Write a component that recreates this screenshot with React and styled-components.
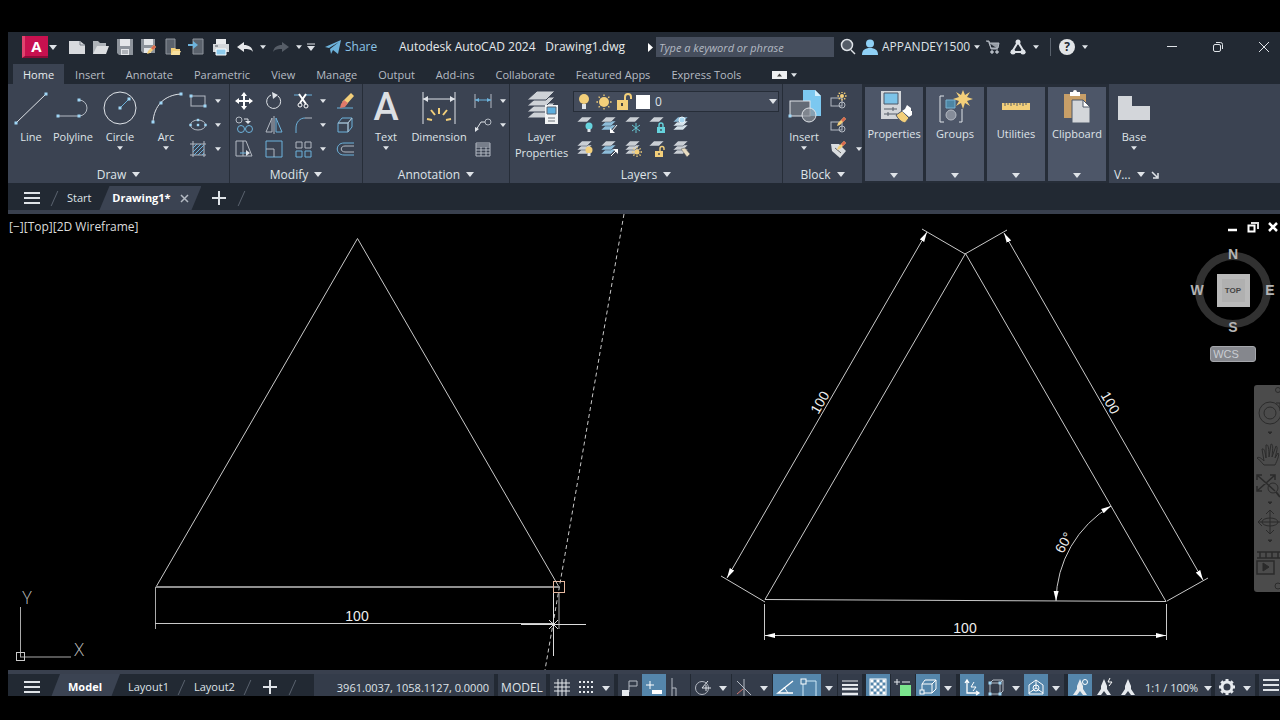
import React, { useState } from 'react';
import styled, { createGlobalStyle } from 'styled-components';

const blue = '#6db3dc';
const light = '#dfe3e8';
const grey = '#b4bac3';
const yellow = '#f3cf7a';

const MENU_TABS = [
  'Home', 'Insert', 'Annotate', 'Parametric', 'View', 'Manage', 'Output',
  'Add-ins', 'Collaborate', 'Featured Apps', 'Express Tools',
];

// Shared icon helpers
const Icon = ({ w = 18, h = w, children }) => (
  <svg width={w} height={h} viewBox={`0 0 ${w} ${h}`} fill="none" stroke={grey} strokeWidth="1" aria-hidden="true">
    {children}
  </svg>
);

const Caret = ({ big }) => (
  <svg width={big ? 8 : 6} height={big ? 5 : 4} viewBox="0 0 8 5" aria-hidden="true">
    <path d="M0 0h8L4 5z" fill={light} />
  </svg>
);

const Dots = ({ at, s = 3 }) =>
  at.map(([x, y]) => (
    <rect key={`${x}-${y}`} x={x - s / 2} y={y - s / 2} width={s} height={s} fill="#9fd6f5" stroke="none" />
  ));

const Sheets = ({ n = 3, tint = '#c9ced4', tint2 = tint }) =>
  Array.from({ length: n }, (_, i) => n - 1 - i).map((i) => (
    <path key={i} d={`M6 ${1 + i * 4}h10l-5 5H1z`} fill={i === 0 ? tint : tint2} stroke="#3b4352" strokeWidth="0.5" />
  ));

const Bulb = ({ x, y, fill }) => (
  <g stroke="none">
    <circle cx={x} cy={y} r="3.5" fill={fill} />
    <rect x={x - 1.5} y={y + 3} width="3" height="3" fill={light} />
  </g>
);

const Sun = ({ x, y, r = 3, fill = yellow }) => (
  <g stroke={fill} strokeWidth="1.3">
    <circle cx={x} cy={y} r={r} fill={fill} stroke="none" />
    {[0, 45, 90, 135, 180, 225, 270, 315].map((a) => (
      <path key={a} d={`M${x} ${y - r - 1}v-1.6`} transform={`rotate(${a} ${x} ${y})`} />
    ))}
  </g>
);

const Lock = ({ x, y, fill, open }) => (
  <g>
    <rect x={x} y={y} width="8" height="6" fill={fill} stroke="none" />
    <path
      d={open ? `M${x + 5} ${y}v-2.5a2 2 0 0 1 4 0v1.5` : `M${x + 2} ${y}v-2a2 2 0 0 1 4 0v2`}
      stroke={fill}
      strokeWidth="1.4"
    />
    <path d={`M${x + 4} ${y + 2}v2`} stroke="#39404e" strokeWidth="1.3" />
  </g>
);

const Pencil = ({ x, y }) => (
  <g stroke="none">
    <path d={`M${x} ${y}l2 2-6 6-3 1 1-3z`} fill={yellow} />
    <path d={`M${x} ${y}l2 2-3 3-2-2z`} fill="#d9694f" />
  </g>
);

const Burger = () => (
  <Icon w={16} h={14}>
    <path d="M0 2h16M0 7h16M0 12h16" stroke={light} strokeWidth="2" />
  </Icon>
);

const Plus = () => (
  <Icon w={14}>
    <path d="M7 0v14M0 7h14" stroke={light} strokeWidth="2" />
  </Icon>
);

const quickTools = [
  {
    name: 'New',
    icon: <Icon><path d="M1 3h11l5 4v9H1z" fill="#d8dade" stroke="none" /><path d="M12 3v4h5" stroke="#7c828c" /></Icon>,
  },
  {
    name: 'Open',
    icon: <Icon><path d="M1 16V3h5l2 2h6v3H6l-3 8z" fill="#aeb3b9" stroke="none" /><path d="M5 8h12l-3 8H1z" fill="#dcdee1" stroke="none" /></Icon>,
  },
  {
    name: 'Save',
    icon: <Icon><path d="M1 1h16v16H3l-2-2z" fill="#8d939b" stroke="none" /><path d="M4 1h10v7H4zM5 11h8v6H5z" fill="#e4e6e9" stroke="none" /><path d="M6 13h6M6 15h6" stroke="#7a8089" /></Icon>,
  },
  {
    name: 'Save As',
    icon: <Icon><path d="M1 1h14v14H3l-2-2z" fill="#8d939b" stroke="none" /><path d="M4 1h9v6H4zM4 10h7v5H4z" fill="#e4e6e9" stroke="none" /><Pencil x={14} y={7} /></Icon>,
  },
  {
    name: 'Open from Web & Mobile',
    icon: <Icon><path d="M2 1h9v15H2z" fill="#5b626c" stroke="#8f959d" /><path d="M7 10h4l1 1h4v6H7z" fill={yellow} stroke="none" /><path d="M9 13h8l-2 4H7z" fill="#f8e0a0" stroke="none" /></Icon>,
  },
  {
    name: 'Save to Web & Mobile',
    icon: <Icon><path d="M5 1h10v15H5z" fill="#5b626c" stroke="#8f959d" /><path d="M0 6h5V3l5 4-5 4V8H0z" fill={blue} stroke="none" /></Icon>,
  },
  {
    name: 'Plot',
    icon: <Icon><path d="M4 1h10v5H4z" fill="#e9ebed" stroke="none" /><path d="M1 6h16v8H1z" fill="#d4d7da" stroke="none" /><path d="M4 11h10v6H4z" fill="#8ecbec" stroke="#fff" /><path d="M3 8h3" stroke="#555b65" /></Icon>,
  },
  {
    name: 'Undo',
    icon: <Icon><path d="M1 9l7-5v3c5 0 8 2 9 7-2-3-5-3-9-3v3z" fill="#e6e8eb" stroke="none" /></Icon>,
  },
];

const smallDraw = [
  ['Rectangle', <Icon><rect x="2" y="4" width="14" height="10" /><Dots at={[[2, 4], [16, 14]]} /></Icon>],
  ['Ellipse', <Icon><ellipse cx="9" cy="9" rx="7.5" ry="5" /><Dots at={[[9, 9], [1.5, 9], [9, 4], [16.5, 9]]} s={2.4} /></Icon>],
  [
    'Hatch',
    <Icon>
      <path d="M4 1v16M15 1v16M1 4h16M1 15h16" />
      <path d="M4 8l4-4M4 12l8-8M5 15l10-10M9 15l6-6M13 15l2-2" stroke={blue} />
    </Icon>,
  ],
];

const modifyTools = [
  { name: 'Move', icon: <Icon><path d="M9 2v14M2 9h14" stroke="#fff" strokeWidth="2" /><path d="M9 0l3 4H6zM9 18l3-4H6zM0 9l4-3v6zM18 9l-4-3v6z" fill="#fff" stroke="none" /></Icon> },
  { name: 'Rotate', icon: <Icon><path d="M6 3a7 7 0 1 0 7 1" stroke={light} /><path d="M7 0l6 3-5 4z" fill={light} stroke="none" /></Icon> },
  { name: 'Trim', caret: true, icon: <Icon><path d="M0 3h5M12 3h6" stroke={blue} /><path d="M5 2l7 10M12 2L6 11" stroke="#fff" strokeWidth="2" /><circle cx="6" cy="13" r="2" stroke="#fff" /><circle cx="12" cy="14" r="2" stroke="#fff" /></Icon> },
  { name: 'Erase', icon: <Icon><path d="M1 16h16" stroke={blue} /><path d="M15 1l3 3-8 9-4-3z" fill={yellow} stroke="none" /><path d="M8 8l4 3-3 4-5 1 1-4z" fill="#e0796a" stroke="none" /></Icon> },
  { name: 'Copy', icon: <Icon><circle cx="4" cy="4" r="3" /><circle cx="6" cy="13" r="3.5" stroke={blue} /><circle cx="14" cy="13" r="3.5" stroke={blue} /><path d="M9 3h4v4" stroke={light} /><path d="M10 5h6l-3 3z" fill={light} stroke="none" /></Icon> },
  { name: 'Mirror', icon: <Icon><path d="M7 2v14H1z" /><path d="M11 2v14h6z" stroke={blue} /><path d="M9 0v18" /></Icon> },
  { name: 'Fillet', caret: true, icon: <Icon><path d="M2 17v-5C2 6 6 2 11 2" stroke={blue} /><path d="M11 2h7" /></Icon> },
  { name: 'Explode', icon: <Icon><path d="M2 7h10v9H2zM2 7l4-5h10l-4 5M16 2v9l-4 5" stroke={blue} /><path d="M2 7h10v9M12 7l4-5" /></Icon> },
  { name: 'Stretch', icon: <Icon><path d="M1 1h7v15H1zM8 1h3l6 15H8" /><path d="M5 13h8" stroke={blue} /><path d="M11 10l4 3-4 3z" fill={light} stroke="none" /></Icon> },
  { name: 'Scale', icon: <Icon><path d="M1 17V1h16v16z" stroke={blue} /><path d="M1 9h8v8" /></Icon> },
  { name: 'Array', caret: true, icon: <Icon><path d="M2 2h6v6H2zM11 2h6v6h-6z" /><path d="M2 11h6v6H2zM11 11h6v6h-6z" stroke={blue} /></Icon> },
  { name: 'Offset', icon: <Icon><path d="M18 3H8C-1 3-1 15 8 15h10" stroke={blue} /><path d="M18 6H9C4 6 4 12 9 12h9" /></Icon> },
];

const layerTools = [
  ['Off', <Icon><Sheets n={1} /><Bulb x={13} y={10} fill="#66d3dd" /></Icon>],
  ['Isolate', <Icon><Sheets tint2="#8dbcd8" /><path d="M17 9l-5 6" stroke="#fff" /><path d="M10 12v5h5z" fill="#fff" stroke="none" /></Icon>],
  ['Freeze', <Icon><Sheets n={1} /><path d="M12 7v10M8 9l8 6M8 15l8-6" stroke="#66c6d3" /></Icon>],
  ['Lock', <Icon><Sheets n={1} /><Lock x={9} y={11} fill="#66d3dd" /></Icon>],
  ['Make Current', <Icon><Sheets tint="#8dbcd8" tint2="#d5e2ea" /><circle cx="10" cy="4" r="3" fill="#a9d8f2" stroke="#e8f2f8" /></Icon>],
  ['Turn All On', <Icon><Sheets /><Bulb x={13} y={10} fill={yellow} /></Icon>],
  ['Unisolate', <Icon><Sheets tint2="#8dbcd8" /><path d="M11 16l5-5" stroke="#fff" /><path d="M13 9h5v5z" fill="#fff" stroke="none" /></Icon>],
  ['Thaw All', <Icon><Sheets /><Sun x={13} y={12} r={2.5} /></Icon>],
  ['Unlock', <Icon><Sheets n={1} /><Lock x={7} y={11} fill={yellow} open /></Icon>],
  ['Match Layer', <Icon><Sheets /><path d="M9 9l4-1 5 6-3 3z" fill="#e8dcc0" stroke="#555" strokeWidth="0.5" /></Icon>],
];

const blockTools = [
  ['Create', <Icon><rect x="1" y="6" width="11" height="8" /><circle cx="12" cy="13" r="3" /><Sun x={12} y={4} r={2} /></Icon>],
  ['Edit', <Icon><rect x="1" y="6" width="11" height="8" /><circle cx="12" cy="13" r="3" /><Pencil x={14} y={1} /></Icon>],
  ['Edit Attributes', <Icon><path d="M1 4h8l7 7-6 7-8-7z" fill="#dadde0" stroke="none" /><path d="M5 8l6 5" stroke="#666" /><Pencil x={14} y={1} /></Icon>],
];

const foldedPanels = [
  {
    name: 'Properties',
    icon: (
      <Icon w={36}>
        <path d="M5 2h20v28H5z" fill="#d3d6da" stroke="none" />
        <path d="M8 4h14v11H8z" fill="#7cc3e8" stroke="#4d5666" />
        <path d="M8 20h13M8 25h13M17 18v4M12 23v4" stroke="#555c68" />
        <path d="M20 26l6-4 7 7-4 5c-4-1-7-4-9-8z" fill={yellow} stroke="#4d5666" />
        <path d="M26 22l3-2 2-4 4 3v3h1v4l-3 2z" fill="#fff" stroke="none" />
      </Icon>
    ),
  },
  {
    name: 'Groups',
    icon: (
      <Icon w={36}>
        <path d="M7 7H3v26h4M22 33h3V20" stroke={light} />
        <path d="M9 11h9v8H9z" fill="#4d86a4" stroke="#79b2d1" />
        <circle cx="14" cy="26" r="5" fill="#858c99" />
        <path d="M26 1l2 5 5-3-3 5 6 2-6 2 3 5-5-3-2 6-2-6-5 3 3-5-6-2 6-2-3-5 5 3z" fill={yellow} stroke="none" />
      </Icon>
    ),
  },
  {
    name: 'Utilities',
    icon: (
      <Icon w={36}>
        <path d="M4 14h28v7H4z" fill={yellow} stroke="none" />
        <path d="M7 14v3M10 14v2M13 14v3M16 14v2M19 14v3M22 14v2M25 14v3M28 14v2" stroke="#555c68" />
      </Icon>
    ),
  },
  {
    name: 'Clipboard',
    icon: (
      <Icon w={36}>
        <path d="M5 5h22v24H5z" fill="#c89f68" stroke="none" />
        <path d="M11 3h3a2 2 0 0 1 4 0h3v4H11z" fill="#fff" stroke="none" />
        <path d="M13 11h11l7 7v16H13z" fill="#d3d6da" stroke="#4d5666" />
        <path d="M24 11v7h7z" fill="#fff" stroke="#4d5666" />
      </Icon>
    ),
  },
];

const S = '#e6eaee';
const Person = ({ cx = 9 }) => (
  <path d={`M${cx} 1l3 7v3l4 6h-4l-3-4-3 4H${cx - 7}l4-6V8z`} fill={S} stroke="none" />
);

// cluster > group > item; "caret" entries are the little drop-down arrows
const statusClusters = [
  [[
    { name: 'Grid', icon: <Icon><path d="M5 1v17M9 1v17M13 1v17M1 5h16M1 9h16M1 13h16" stroke={S} /></Icon> },
    { name: 'Snap', icon: <Icon>{[3, 7, 11, 15].map((x) => <path key={x} d={`M${x} 3v2M${x} 8v2M${x} 13v2`} stroke={S} strokeWidth="2" />)}</Icon> },
    { caret: true },
  ]],
  [
    [
      { name: 'Infer', icon: <Icon><path d="M8 14V3h8v5H8" stroke={grey} /><path d="M1 12h7v6H1z" fill={S} stroke="none" /></Icon> },
      { name: 'Dynamic Input', on: true, icon: <Icon><path d="M5 3v8M1 7h8" stroke="#fff" /><path d="M7 12h10v4H7z" fill="#fff" stroke="none" /></Icon> },
      { name: 'Ortho', icon: <Icon><path d="M3 0v18M3 10h4v8" /></Icon> },
    ],
    [
      { name: 'Polar', icon: <Icon><circle cx="8" cy="10" r="6.5" /><path d="M8 10h9M8 10l6-7M12 7v6" stroke={light} /></Icon> },
      { caret: true },
    ],
    [
      { name: 'Isodraft', icon: <Icon><path d="M9 1v17M2 3l14 14" /><path d="M2 16l6-5" stroke="#d5776e" /></Icon> },
      { caret: true },
    ],
    [
      { name: 'Tracking', on: true, icon: <Icon><path d="M17 3L2 15h15" stroke="#fff" strokeWidth="1.4" /><path d="M8 9l4 6" stroke="#fff" /></Icon> },
      { name: 'Object Snap', on: true, icon: <Icon><path d="M3 3h13v15M3 5v13" stroke="#cfe9f8" /><rect x="1" y="1" width="5" height="5" stroke="#fff" fill="#5586ab" /></Icon> },
      { caret: true },
    ],
    [{ name: 'Lineweight', icon: <Icon><path d="M1 3h16" stroke={S} /><path d="M1 7h16" stroke={S} strokeWidth="2" /><path d="M1 11h16M1 16h16" stroke={S} strokeWidth="2.6" /></Icon> }],
  ],
  [
    [{
      name: 'Transparency',
      on: true,
      icon: (
        <Icon>
          <rect x="1" y="1" width="16" height="16" stroke="#fff" />
          {[0, 1, 2, 3, 4].map((r) => [0, 1, 2, 3, 4].map((c) => (r + c) % 2 === 0 && (
            <rect key={`${r}${c}`} x={1.5 + c * 3} y={1.5 + r * 3} width="3" height="3" fill="#fff" stroke="none" />
          )))}
        </Icon>
      ),
    }],
    [{ name: 'Cycling', icon: <Icon><path d="M3 1v6M0 4h6M8 4h8" stroke={S} /><path d="M6 7h11v11H6z" fill="#7be58d" stroke="none" /></Icon> }],
    [
      { name: '3D Object Snap', on: true, icon: <Icon><path d="M3 6h10v9H3zM3 6l3-4h11l-4 4M17 2v9l-4 4" stroke="#fff" /><rect x="1" y="12" width="4" height="4" fill="#5586ab" stroke="#fff" /></Icon> },
      { caret: true },
    ],
  ],
  [[
    { name: 'Dynamic UCS', on: true, icon: <Icon><path d="M4 2v13h12M2 5l2-3 2 3M13 13l3 2-3 2" stroke="#fff" strokeWidth="1.3" /><path d="M11 4l-3 5h5l-3 4" stroke="#fff" /></Icon> },
    { name: 'Selection Filter', icon: <Icon><path d="M3 5h10v11H3zM3 5l3-3h10l-3 3M16 2v11l-3 3" /><Dots at={[[3, 5], [13, 5], [3, 16], [13, 16]]} /></Icon> },
    { caret: true },
    { name: 'Gizmo', on: true, icon: <Icon><path d="M9 2l7 5v9H2V7zM9 2v8M9 10l-7 5M9 10l7 5" stroke="#fff" /><circle cx="9" cy="10" r="3" stroke="#fff" /></Icon> },
    { caret: true },
  ]],
  [[
    { name: 'Annotation Visibility', on: true, icon: <Icon><Person /><circle cx="14" cy="4" r="2.5" stroke="#fff" /></Icon> },
    { name: 'Auto Scale', icon: <Icon><Person /><path d="M15 0l-2 4h4l-3 4" stroke="#fff" /></Icon> },
    { name: 'Annotation Scale', icon: <Icon><Person /></Icon> },
    { text: '1:1 / 100%' },
  ]],
  [[
    {
      name: 'Workspace',
      icon: (
        <Icon>
          <circle cx="9" cy="9" r="5" stroke={S} strokeWidth="3" />
          {[0, 45, 90, 135, 180, 225, 270, 315].map((a) => <path key={a} d="M9 1v3" stroke={S} strokeWidth="3" transform={`rotate(${a} 9 9)`} />)}
        </Icon>
      ),
    },
    { caret: true },
  ]],
  [[{ name: 'Customization', icon: <Burger /> }]],
];

const dimensionLines = [
  'M927 232L727 578',
  'M1004 233l199 347',
  'M765 635.5h401',
  'M1056 601A112 112 0 0 1 1111 506',
];

const Drawing = () => (
  <DrawingSvg viewBox="8 214 1272 456" preserveAspectRatio="xMinYMin meet" role="img" aria-label="Drawing area">
    <defs>
      <marker id="tip" viewBox="0 0 10 6" refX="10" refY="3" markerWidth="10" markerHeight="6" orient="auto-start-reverse">
        <path d="M0 0.5L10 3 0 5.5z" fill="#fff" />
      </marker>
    </defs>
    <g stroke="#c9c9c9" fill="none">
      <path d="M156 587L357.5 238.5 559 587" />
      <path d="M156 587h403" stroke="#8f8f8f" strokeWidth="2" />
      <path d="M155.5 587v42M559 593v36" stroke="#aaa" />
      <path d="M155 623.5h398" />
      <path d="M624 214L545 670" strokeDasharray="4 3" />
      <path d="M521 624.5h65M553.5 588v68M549 620l9 9M558 620l-9 9" stroke="#ddd" />
      <rect x="553.5" y="581.5" width="11" height="11" stroke="#e6b9a0" />
      <path d="M765 599.5L965.5 253.5 1166 601.5z" />
      <path d="M922 229l43 25 42-24M721 576l44 26M1167 601l41-23M764.5 604v36M1166.5 604v36" />
      {dimensionLines.map((d) => <path key={d} d={d} markerStart="url(#tip)" markerEnd="url(#tip)" />)}
      <path d="M20.5 607v50M20 657h51" stroke="#aaa" />
      <rect x="16.5" y="652.5" width="8" height="8" />
    </g>
    <g fill="#eee" fontFamily="Liberation Sans, Arial, sans-serif" fontSize="14" textAnchor="middle">
      <text x="357" y="621">100</text>
      <text x="965" y="633">100</text>
      <text transform="translate(824 405) rotate(-60)">100</text>
      <text transform="translate(1106 405) rotate(60)">100</text>
      <text transform="translate(1068 545) rotate(-60)">60°</text>
    </g>
    <g fill="#bbb" fontFamily="Open Sans, sans-serif" fontWeight="300" fontSize="18" textAnchor="middle">
      <text x="27" y="604">Y</text>
      <text x="79" y="656">X</text>
    </g>
  </DrawingSvg>
);

const ToolColumn = ({ tools, carets }) => (
  <SmallColumn>
    {tools.map(([name, icon], i) => (
      <SmallRow key={name}>
        <SmallButton aria-label={name}>{icon}</SmallButton>
        {carets[i] && <CaretButton aria-label={`${name} options`}><Caret /></CaretButton>}
      </SmallRow>
    ))}
  </SmallColumn>
);

const Big = ({ w, label, caret, children }) => (
  <BigButton $w={w}>
    {children}
    <BigLabel>{label}</BigLabel>
    {caret && <Caret />}
  </BigButton>
);

const App = () => {
  const [activeTab, setActiveTab] = useState('Home');

  return (
    <>
      <GlobalStyle />
      <Window>
        <TitleBar>
          <QuickAccess>
            <AppButton>A</AppButton>
            <AppCaret aria-label="Application menu"><Caret big /></AppCaret>
            {quickTools.map((t) => <QuickButton key={t.name} aria-label={t.name}>{t.icon}</QuickButton>)}
            <CaretButton aria-label="Undo list"><Caret /></CaretButton>
            <QuickButton aria-label="Redo">
              <Icon><path d="M17 9l-7-5v3C5 7 2 9 1 14c2-3 5-3 9-3v3z" fill="#565d67" stroke="none" /></Icon>
            </QuickButton>
            <CaretButton aria-label="Redo list"><Caret /></CaretButton>
            <CaretButton aria-label="Customize">
              <Icon w={8}><path d="M0 1h8" stroke={light} /><path d="M0 3h8L4 8z" fill={light} stroke="none" /></Icon>
            </CaretButton>
            <ShareButton>
              <Icon w={16}><path d="M0 8L16 1 13 15 8 11l-2 4-1-5 9-7-10 6z" fill={blue} stroke="none" /></Icon>
              Share
            </ShareButton>
          </QuickAccess>
          <Title>
            <span>Autodesk AutoCAD 2024</span>
            <span>Drawing1.dwg</span>
          </Title>
          <Icon w={9}><path d="M1 0v9l5-4.5z" fill="#fff" stroke="none" /></Icon>
          <Search type="text" placeholder="Type a keyword or phrase" aria-label="Search" />
          <Account>
            <SmallButton aria-label="Search">
              <Icon><circle cx="8" cy="7" r="5.5" fill="#555d68" stroke={light} strokeWidth="1.5" /><path d="M12 12l4 4" stroke={light} strokeWidth="1.5" /></Icon>
            </SmallButton>
            <UserButton>
              <Icon w={16}><circle cx="8" cy="4.5" r="4" fill="#8fd0f5" stroke="none" /><path d="M0 16c0-5 3-7 8-7s8 2 8 7z" fill="#8fd0f5" stroke="none" /></Icon>
              APPANDEY1500
              <Caret />
            </UserButton>
            <CartButton aria-label="Store">
              <Icon w={14}><path d="M0 1h3l2 8h7M3 3h10l-1 5H5z" fill="#969ca5" stroke={grey} /><circle cx="6" cy="12" r="1.3" fill={grey} /><circle cx="11" cy="12" r="1.3" fill={grey} /></Icon>
            </CartButton>
            <QuickButton aria-label="Autodesk apps">
              <Icon w={16}><path d="M8 3L2 13h12z" stroke={light} strokeWidth="2" /><g fill={light} stroke="none"><circle cx="8" cy="3" r="2.5" /><circle cx="3" cy="13" r="2.5" /><circle cx="13" cy="13" r="2.5" /></g></Icon>
            </QuickButton>
            <CaretButton aria-label="Apps list"><Caret /></CaretButton>
            <Separator />
            <HelpButton aria-label="Help">?</HelpButton>
            <CaretButton aria-label="Help list"><Caret /></CaretButton>
          </Account>
          <WindowButtons>
            <WindowButton aria-label="Minimize"><Icon w={12}><path d="M1 5.5h10" stroke={light} /></Icon></WindowButton>
            <WindowButton aria-label="Restore"><Icon w={12}><rect x="1.5" y="3.5" width="7" height="7" rx="1.5" stroke={light} /><path d="M4 1.5h4.5a2 2 0 0 1 2 2V8" stroke={light} /></Icon></WindowButton>
            <WindowButton aria-label="Close"><Icon w={12}><path d="M1 1l10 10M11 1L1 11" stroke={light} /></Icon></WindowButton>
          </WindowButtons>
        </TitleBar>

        <MenuBar>
          {MENU_TABS.map((tab) => (
            <MenuTab key={tab} $active={tab === activeTab} onClick={() => setActiveTab(tab)}>{tab}</MenuTab>
          ))}
          <RibbonToggle aria-label="Minimize ribbon">
            <Icon w={15} h={8}><path d="M0 0h15v8H0z" fill="#eef0f2" stroke="none" /><path d="M5 5.5h5L7.5 2.5z" fill="#444" stroke="none" /></Icon>
            <Caret />
          </RibbonToggle>
        </MenuBar>

        <Ribbon>
          <Panel $w={222}>
            <PanelBody>
              <Big w={46} label="Line">
                <Icon w={36}><path d="M3 33L33 4" stroke={light} /><Dots at={[[3, 33], [33, 4]]} /></Icon>
              </Big>
              <Big w={38} label="Polyline">
                <Icon w={36}><path d="M3 26h21a8 8 0 0 0 0-16" stroke={grey} /><Dots at={[[3, 26], [24, 26], [24, 10]]} /></Icon>
              </Big>
              <Big w={56} label="Circle" caret>
                <Icon w={36}><circle cx="18" cy="18" r="16" stroke={light} /><path d="M18 18l9-9" stroke={blue} /><Dots at={[[18, 18], [27, 9]]} /></Icon>
              </Big>
              <Big w={36} label="Arc" caret>
                <Icon w={36}><path d="M5 32C6 16 16 5 33 4" stroke={light} /><Dots at={[[5, 32], [13, 13], [33, 4]]} /></Icon>
              </Big>
              <ToolColumn tools={smallDraw} carets={[true, true, true]} />
            </PanelBody>
            <PanelTitle>Draw <Caret big /></PanelTitle>
          </Panel>

          <Panel $w={133}>
            <ModifyGrid>
              {modifyTools.map((t) => (
                <SmallRow key={t.name}>
                  <SmallButton aria-label={t.name}>{t.icon}</SmallButton>
                  {t.caret && <CaretButton aria-label={`${t.name} options`}><Caret /></CaretButton>}
                </SmallRow>
              ))}
            </ModifyGrid>
            <PanelTitle>Modify <Caret big /></PanelTitle>
          </Panel>

          <Panel $w={147}>
            <PanelBody>
              <Big w={46} label="Text" caret><BigLetter>A</BigLetter></Big>
              <Big w={60} label="Dimension">
                <Icon w={36}>
                  <path d="M2 2v32M34 2v32M2 9h32" stroke={light} />
                  <path d="M2 9l5-3v6zM34 9l-5-3v6z" fill={light} stroke="none" />
                  <path d="M18 18v6M10 20l4 5M26 20l-4 5M6 29l5 1M30 29l-5 1" stroke={yellow} strokeWidth="2" />
                </Icon>
              </Big>
              <ToolColumn
                carets={[true, true, false]}
                tools={[
                  ['Linear', <Icon><path d="M1 2v14M17 2v14" /><path d="M1 8h16" stroke={blue} /><path d="M1 8l4-2v4zM17 8l-4-2v4z" fill={blue} stroke="none" /></Icon>],
                  ['Leader', <Icon><circle cx="14" cy="6" r="3" /><path d="M11 6H7l-5 8" stroke={light} /><path d="M1 16V11l4 2z" fill={light} stroke="none" /></Icon>],
                  ['Table', <Icon><path d="M2 3h14v13H2zM2 7h14M2 10h14M2 13h14M7 7v9M12 7v9M2 5h14" /></Icon>],
                ]}
              />
            </PanelBody>
            <PanelTitle>Annotation <Caret big /></PanelTitle>
          </Panel>

          <Panel $w={273}>
            <PanelBody>
              <Big w={63} label={<>Layer<br />Properties</>}>
                <Icon w={36}>
                  {[19, 13, 7, 1].map((y) => <path key={y} d={`M13 ${y}h18l-9 9H3z`} fill="#ced2d7" stroke="#3b4352" />)}
                  <rect x="21" y="15" width="13" height="19" fill="#f2f4f5" stroke="none" />
                  <path d="M23 17h9v7h-9z" fill="#5caede" stroke="#5b6472" />
                  <path d="M24 28h7M24 31h7" stroke="#6b7079" />
                </Icon>
              </Big>
              <LayerSide>
                <LayerCombo>
                  <Icon w={20}><circle cx="9" cy="7" r="5" fill={yellow} stroke="none" /><path d="M7 12h4v5H7z" fill={light} stroke="none" /></Icon>
                  <Icon w={20}><Sun x={9} y={10} r={5} /></Icon>
                  <Icon w={20}><path d="M2 8h11v10H2z" fill={yellow} stroke="none" /><path d="M10 8V5a3 3 0 0 1 6 0v2" stroke={yellow} strokeWidth="2" /><path d="M7 11v3" stroke="#444" strokeWidth="2" /></Icon>
                  <Icon w={16}><path d="M1 1h14v14H1z" fill="#fff" stroke="none" /></Icon>
                  <LayerSelect aria-label="Current layer" defaultValue="0">
                    <option value="0">0</option>
                  </LayerSelect>
                  <Caret big />
                </LayerCombo>
                <LayerGrid>
                  {layerTools.map(([name, icon]) => <SmallButton key={name} aria-label={name}>{icon}</SmallButton>)}
                </LayerGrid>
              </LayerSide>
            </PanelBody>
            <PanelTitle>Layers <Caret big /></PanelTitle>
          </Panel>

          <Panel $w={80}>
            <PanelBody>
              <Big w={42} label="Insert" caret>
                <Icon w={36}>
                  <path d="M17 0h12l6 6v20H17z" fill="#7cc8f0" stroke="none" />
                  <path d="M29 0v6h6z" fill="#d5effc" stroke="none" />
                  <rect x="4" y="11" width="20" height="15" fill="#646b76" stroke={light} />
                  <circle cx="23" cy="25" r="7" fill="#8a9099" fillOpacity="0.7" stroke={light} />
                  <Dots at={[[4, 26]]} />
                </Icon>
              </Big>
              <ToolColumn tools={blockTools} carets={[false, false, true]} />
            </PanelBody>
            <PanelTitle>Block <Caret big /></PanelTitle>
          </Panel>

          <FoldedGroup>
            {foldedPanels.map((p) => (
              <FoldedPanel key={p.name}>
                {p.icon}
                <FoldedLabel>{p.name}</FoldedLabel>
                <FoldedCaret><Caret big /></FoldedCaret>
              </FoldedPanel>
            ))}
          </FoldedGroup>

          <ViewPanel>
            <PanelBody>
              <Big w={50} label="Base" caret>
                <Icon w={36}><path d="M2 6h14v10h18v14H2z" fill="#d3d6da" stroke="none" /></Icon>
              </Big>
            </PanelBody>
            <ViewTitle>V... <Caret big /><Icon w={8}><path d="M1 1l5 5M7 2v5H2" stroke={light} strokeWidth="1.5" /></Icon></ViewTitle>
          </ViewPanel>
        </Ribbon>

        <FileTabs>
          <BurgerButton aria-label="File tab menu"><Burger /></BurgerButton>
          <Slash />
          <FileTab>Start</FileTab>
          <ActiveFileTab $w={102}>
            Drawing1*
            <Icon w={9}><path d="M1 1l7 7M8 1L1 8" stroke={grey} strokeWidth="1.5" /></Icon>
          </ActiveFileTab>
          <AddButton aria-label="New drawing"><Plus /></AddButton>
          <Slash />
        </FileTabs>

        <Canvas>
          <Drawing />
          <ViewLabel>
            <ViewButton>[−]</ViewButton>
            <ViewButton>[Top]</ViewButton>
            <ViewButton>[2D Wireframe]</ViewButton>
          </ViewLabel>
          <DocButtons>
            <DocButton aria-label="Minimize drawing"><Icon w={12}><path d="M1 9h9" stroke="#fff" strokeWidth="2.5" /></Icon></DocButton>
            <DocButton aria-label="Restore drawing"><Icon w={12}><path d="M4 2h7v6" stroke="#ddd" strokeWidth="2" /><rect x="1.5" y="4.5" width="6" height="6" stroke="#fff" strokeWidth="2" /></Icon></DocButton>
            <DocButton aria-label="Close drawing"><Icon w={12}><path d="M2 2l8 8M10 2l-8 8" stroke="#fff" strokeWidth="2.5" /></Icon></DocButton>
          </DocButtons>
          <ViewCube>
            <svg width="88" height="88" viewBox="0 0 88 88" role="img" aria-label="View cube">
              <circle cx="44" cy="44" r="34" fill="none" stroke="#313131" strokeWidth="8" />
              <rect x="28" y="28" width="33" height="33" fill="#b9b9b9" />
              <rect x="33" y="33" width="23" height="23" fill="#b0b0b0" />
              <g fill="#b4b4b4" fontFamily="Liberation Sans, Arial, sans-serif" fontWeight="700" fontSize="14" textAnchor="middle">
                <text x="44" y="13">N</text>
                <text x="44" y="86">S</text>
                <text x="8" y="49">W</text>
                <text x="81" y="49">E</text>
                <text x="44" y="47" fontSize="8" fill="#444">TOP</text>
              </g>
            </svg>
            <WcsButton>WCS</WcsButton>
          </ViewCube>
          <NavBar>
            <Icon w={26} h={207}>
              <g stroke="#2b2b2b">
                <circle cx="24" cy="5" r="2.5" />
                <circle cx="16" cy="28" r="11" /><circle cx="16" cy="28" r="6" /><path d="M22 18h4v8" />
                <path d="M14 47h4l-2 2zM14 117h4l-2 2zM14 155h4l-2 2z" fill="#2b2b2b" />
                <path d="M10 80c-3-3-5-6-7-7 2-2 5 1 7 3l-2-12c2-1 3 2 4 9V60c2-1 3 2 3 12l2-13c2 0 2 3 1 13l4-11c2 1 1 4-1 12l3-5c2 1-1 8-3 12z" />
                <path d="M3 90l18 16M21 90L3 106M3 95v-5h5M16 90h5v5M3 101v5h5" strokeWidth="1.5" />
                <circle cx="19" cy="103" r="5" /><path d="M22 107l4 5" strokeWidth="2" />
                <path d="M16 125v24M4 137h22M12 129l4-4 4 4M12 145l4 4 4-4M8 133l-4 4 4 4" />
                <ellipse cx="16" cy="137" rx="8" ry="4" />
                <path d="M3 167h23M3 173h23M6 167v6M12 167v6M18 167v6M24 167v6M3 176h17v13H3z" strokeWidth="1.5" />
                <path d="M9 178l6 4-6 4z" fill="#2b2b2b" />
                <circle cx="24" cy="201" r="3" />
              </g>
            </Icon>
          </NavBar>
        </Canvas>

        <StatusBar>
          <LayoutTabs>
            <BurgerButton aria-label="Layout menu"><Burger /></BurgerButton>
            <ActiveFileTab $w={70}>Model</ActiveFileTab>
            <FileTab>Layout1</FileTab>
            <Slash />
            <FileTab>Layout2</FileTab>
            <Slash />
            <AddButton aria-label="New layout"><Plus /></AddButton>
            <Slash />
          </LayoutTabs>
          <Coordinates>3961.0037, 1058.1127, 0.0000</Coordinates>
          <ModelButton>MODEL</ModelButton>
          {statusClusters.map((groups, c) => (
            <StatusCluster key={c}>
              {groups.map((items, g) => (
                <StatusGroup key={g}>
                  {items.map((item, i) => {
                    if (item.caret) return <StatusCaret key={i} aria-label="Options"><Caret big /></StatusCaret>;
                    if (item.text) return <ScaleButton key={i}>{item.text} <Caret big /></ScaleButton>;
                    return <StatusButton key={i} $on={item.on} aria-label={item.name}>{item.icon}</StatusButton>;
                  })}
                </StatusGroup>
              ))}
            </StatusCluster>
          ))}
        </StatusBar>
      </Window>
    </>
  );
};

export default App;

// Styled Components
const GlobalStyle = createGlobalStyle`
  * {
    box-sizing: border-box;
  }

  body {
    margin: 0;
    background: #000;
    color: #dfe3e8;
    font-family: 'Open Sans', 'Noto Sans', sans-serif;
    font-size: 12px;
    line-height: 16px;
  }

  button, input, select {
    margin: 0;
    padding: 0;
    border: 0;
    background: none;
    color: inherit;
    font: inherit;
    white-space: nowrap;
  }

  svg {
    display: block;
    flex-shrink: 0;
  }
`;

const Window = styled.div`
  display: flex;
  flex-direction: column;
  min-height: 100vh;
  padding: 32px 0 24px 8px;
  overflow: hidden;
`;

const TitleBar = styled.header`
  display: flex;
  align-items: center;
  height: 32px;
  padding-bottom: 2px;
  background: #222933;
`;

const QuickAccess = styled.div`
  display: flex;
  align-items: center;
  min-width: 391px;
  padding-left: 14px;
`;

const AppButton = styled.button`
  width: 26px;
  height: 22px;
  background: #c8114f;
  border-left: 3px solid #e0446f;
  border-bottom: 2px solid #8c0b38;
  color: #fff;
  font-size: 15px;
  font-weight: 700;
`;

const AppCaret = styled.button`
  display: flex;
  justify-content: center;
  width: 10px;
  margin-right: 7px;
`;

const QuickButton = styled.button`
  display: flex;
  align-items: center;
  justify-content: center;
  width: 24px;
  height: 24px;
`;

const CaretButton = styled.button`
  display: flex;
  align-items: center;
  justify-content: center;
  width: 12px;
  height: 20px;
`;

const ShareButton = styled.button`
  display: flex;
  align-items: center;
  gap: 4px;
  margin-left: 8px;
  color: #8cc4e6;
`;

const Title = styled.div`
  display: flex;
  justify-content: space-between;
  width: 226px;
  margin-right: 22px;
  color: #e6e9ec;
  white-space: nowrap;
`;

const Search = styled.input`
  width: 178px;
  height: 20px;
  padding: 0 3px;
  background: #464e5d;
  font-size: 11px;

  &::placeholder {
    color: #b3b9c2;
    font-style: italic;
  }
`;

const Account = styled.div`
  display: flex;
  align-items: center;
`;

const UserButton = styled.button`
  display: flex;
  align-items: center;
  gap: 4px;
  width: 118px;
`;

const CartButton = styled.button`
  display: flex;
  align-items: center;
  justify-content: center;
  width: 26px;
`;

const Separator = styled.span`
  width: 1px;
  height: 18px;
  margin: 0 8px;
  background: #59616c;
`;

const HelpButton = styled.button`
  width: 16px;
  height: 16px;
  margin-right: 4px;
  border-radius: 50%;
  background: #e2e4e7;
  color: #222933;
  font-weight: 700;
`;

const WindowButtons = styled.div`
  display: flex;
  gap: 14px;
  margin-left: auto;
`;

const WindowButton = styled.button`
  display: flex;
  justify-content: center;
  width: 32px;
`;

const MenuBar = styled.nav`
  display: flex;
  align-items: stretch;
  gap: 1px;
  height: 20px;
  padding-left: 5px;
  background: #222933;
`;

const MenuTab = styled.button`
  padding: 2px 10px 0;
  font-size: 11px;
  line-height: 18px;
  background: ${({ $active }) => ($active ? '#3b4352' : 'transparent')};
  color: ${({ $active }) => ($active ? '#e8ebee' : '#b6bcc4')};
`;

const RibbonToggle = styled.button`
  display: flex;
  align-items: center;
  gap: 4px;
  margin-left: 20px;
  padding-top: 2px;
`;

const Ribbon = styled.section`
  display: flex;
  height: 99px;
  background: #3b4352;
`;

const Panel = styled.div`
  display: flex;
  flex-direction: column;
  flex-shrink: 0;
  width: ${({ $w }) => $w}px;
  padding-top: 5px;
  border-right: 1px solid #262d38;
`;

const PanelBody = styled.div`
  display: flex;
  height: 77px;
`;

const PanelTitle = styled.div`
  display: flex;
  align-items: center;
  justify-content: center;
  gap: 6px;
  line-height: 17px;
`;

const BigButton = styled.button`
  display: flex;
  flex-direction: column;
  align-items: center;
  flex-shrink: 0;
  width: ${({ $w }) => $w}px;
  padding-top: 1px;
`;

const BigLabel = styled.span`
  padding: 3px 0 1px;
  font-size: 11px;
`;

const FoldedLabel = styled.span`
  padding-top: 1px;
  font-size: 11px;
`;

const BigLetter = styled.span`
  height: 36px;
  color: #dcdfe3;
  font-family: Roboto, sans-serif;
  font-size: 38px;
  font-weight: 500;
  line-height: 34px;
`;

const SmallColumn = styled.div`
  display: flex;
  flex-direction: column;
`;

const SmallRow = styled.div`
  display: flex;
  align-items: center;
  height: 24px;
`;

const SmallButton = styled.button`
  display: flex;
  align-items: center;
  justify-content: center;
  width: 28px;
  height: 24px;
`;

const ModifyGrid = styled.div`
  display: grid;
  grid-template-columns: 30px 29px 42px 28px;
  height: 77px;
  align-content: start;
`;

const LayerSide = styled.div`
  padding-top: 2px;
`;

const LayerCombo = styled.div`
  display: flex;
  align-items: center;
  width: 206px;
  height: 21px;
  margin-bottom: 1px;
  padding: 0 1px;
  background: #444c5c;
  border: 1px solid #262d38;
`;

const LayerSelect = styled.select`
  flex: 1;
  padding-left: 4px;
  appearance: none;
  outline: none;
`;

const LayerGrid = styled.div`
  display: grid;
  grid-template-columns: repeat(5, 24px);
  justify-items: center;
`;

const FoldedGroup = styled.div`
  display: flex;
  gap: 3px;
  padding: 3px 3px 2px 2px;
  background: #262d38;
`;

const FoldedPanel = styled.button`
  display: flex;
  flex-direction: column;
  align-items: center;
  width: 58px;
  padding-top: 2px;
  background: #4d5668;
`;

const FoldedCaret = styled.span`
  margin-top: auto;
  padding-bottom: 3px;
`;

const ViewPanel = styled.div`
  flex: 1;
  padding-top: 5px;
`;

const ViewTitle = styled.div`
  display: flex;
  align-items: center;
  gap: 6px;
  padding-left: 5px;
  line-height: 17px;
`;

const FileTabs = styled.div`
  display: flex;
  align-items: stretch;
  height: 31px;
  padding-top: 3px;
  background: #222933;
  border-bottom: 4px solid #39404e;
`;

const BurgerButton = styled.button`
  display: flex;
  align-items: center;
  padding-left: 16px;
  width: 42px;
`;

const Slash = styled.span`
  align-self: center;
  width: 1px;
  height: 15px;
  margin: 0 4px;
  background: #5b636f;
  transform: skewX(-24deg);
`;

const FileTab = styled.button`
  padding: 0 8px;
  font-size: 11px;
`;

const ActiveFileTab = styled.button`
  display: flex;
  align-items: center;
  justify-content: center;
  gap: 9px;
  width: ${({ $w }) => $w}px;
  background: #3b4352;
  clip-path: polygon(10px 0, 100% 0, calc(100% - 10px) 100%, 0 100%);
  color: #fff;
  font-size: 11px;
  font-weight: 700;
`;

const AddButton = styled.button`
  display: flex;
  align-items: center;
  justify-content: center;
  width: 36px;
`;

const Canvas = styled.main`
  position: relative;
  flex: 1;
  background: #000;
  overflow: hidden;
`;

const DrawingSvg = styled.svg`
  width: 100%;
`;

const ViewLabel = styled.div`
  position: absolute;
  top: 5px;
  left: 1px;
  display: flex;
`;

const ViewButton = styled.button`
  color: #dcdcdc;
`;

const DocButtons = styled.div`
  position: absolute;
  top: 7px;
  right: 1px;
  display: flex;
  gap: 8px;
`;

const DocButton = styled.button`
  width: 12px;
`;

const ViewCube = styled.div`
  position: absolute;
  top: 32px;
  right: 3px;
  display: flex;
  flex-direction: column;
  align-items: center;
  gap: 12px;
`;

const WcsButton = styled.button`
  width: 46px;
  height: 16px;
  padding-right: 14px;
  border: 1px solid #a5a7ac;
  border-radius: 3px;
  background: #85878d;
  color: #c9cdd3;
  font: 11px/14px 'Liberation Sans', Arial, sans-serif;
`;

const NavBar = styled.div`
  position: absolute;
  top: 171px;
  right: 0;
  border-radius: 3px 0 0 3px;
  background: #4b4b4b;
`;

const StatusBar = styled.footer`
  display: flex;
  gap: 4px;
  height: 26px;
  background: #222933;
  border-top: 4px solid #39404e;
  overflow: hidden;
`;

const LayoutTabs = styled.div`
  display: flex;
  flex-shrink: 0;
  width: 302px;
  height: 26px;
`;

const Coordinates = styled.div`
  flex-shrink: 0;
  width: 180px;
  padding: 3px 5px 0 0;
  background: #343c4a;
  font-size: 11px;
  text-align: right;
  line-height: 22px;
  white-space: nowrap;
`;

const ModelButton = styled.button`
  flex-shrink: 0;
  width: 48px;
  padding-top: 6px;
  background: #343c4a;
`;

const StatusCluster = styled.div`
  display: flex;
  gap: 1px;
  flex-shrink: 0;
`;

const StatusGroup = styled.div`
  display: flex;
  background: #343c4a;
`;

const StatusButton = styled.button`
  display: flex;
  align-items: flex-start;
  justify-content: center;
  width: 24px;
  padding-top: 4px;
  background: ${({ $on }) => ($on ? '#5586ab' : 'transparent')};
`;

const StatusCaret = styled.button`
  display: flex;
  align-items: center;
  justify-content: center;
  width: 16px;
  padding-top: 6px;
`;

const ScaleButton = styled.button`
  display: flex;
  align-items: center;
  gap: 6px;
  width: 71px;
  padding: 6px 0 0 5px;
  font-size: 11px;
`;
